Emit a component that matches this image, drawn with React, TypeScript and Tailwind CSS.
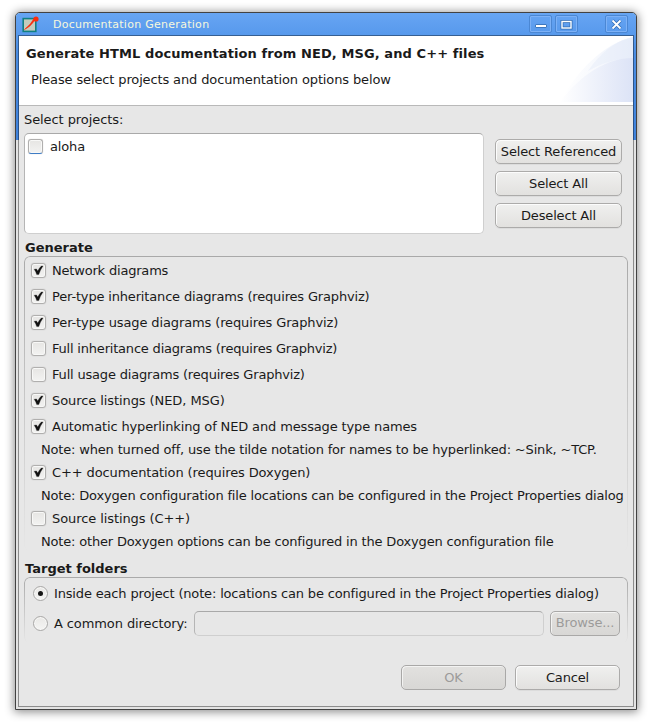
import React, { useState } from 'react';
import clsx from 'clsx';

const options = [
  { id: 'network', label: 'Network diagrams', checked: true, tracking: 'tracking-[-0.19px]' },
  { id: 'inheritance', label: 'Per-type inheritance diagrams (requires Graphviz)', checked: true, tracking: 'tracking-[-0.165px]' },
  { id: 'usage', label: 'Per-type usage diagrams (requires Graphviz)', checked: true, tracking: 'tracking-[-0.12px]' },
  { id: 'full-inheritance', label: 'Full inheritance diagrams (requires Graphviz)', checked: false, tracking: 'tracking-[-0.2px]' },
  { id: 'full-usage', label: 'Full usage diagrams (requires Graphviz)', checked: false, tracking: 'tracking-[-0.185px]' },
  { id: 'ned', label: 'Source listings (NED, MSG)', checked: true, tracking: 'tracking-[-0.08px]' },
  {
    id: 'hyperlink',
    label: 'Automatic hyperlinking of NED and message type names',
    checked: true,
    tracking: 'tracking-[-0.14px]',
    note: 'Note: when turned off, use the tilde notation for names to be hyperlinked: ~Sink, ~TCP.',
  },
  {
    id: 'doxygen',
    label: 'C++ documentation (requires Doxygen)',
    checked: true,
    tracking: 'tracking-[-0.11px]',
    note: 'Note: Doxygen configuration file locations can be configured in the Project Properties dialog',
  },
  {
    id: 'cpp',
    label: 'Source listings (C++)',
    checked: false,
    tracking: 'tracking-[-0.09px]',
    note: 'Note: other Doxygen options can be configured in the Doxygen configuration file',
  },
];

function Check({ checked, focused }: { checked: boolean; focused?: boolean }) {
  return (
    <span
      className={clsx(
        'flex w-[15px] h-[15px] shrink-0 rounded-[3px] border border-[#b0afae] bg-linear-to-b from-[#e6e5e3] to-[#f3f3f2] shadow-[inset_0_0_0_1px_#f8f8f7,0_0_1px_rgba(0,0,0,0.25)]',
        focused && 'border-b-[#3f7cc4]'
      )}
    >
      {checked && (
        <svg viewBox="0 0 13 13" className="w-[13px] h-[13px]">
          <path d="M2.2 5.3 L4.5 4.9 L5.7 7 Q7.3 3.8 9.4 2 L11 2.1 Q8.2 5.8 6.8 10.6 L4.7 10.6 Q3.9 7.7 2.2 5.3Z" fill="#111111" stroke="#111111" strokeWidth="0.3" />
        </svg>
      )}
    </span>
  );
}

function Radio({ checked }: { checked: boolean }) {
  return (
    <span className="flex w-[15px] h-[15px] shrink-0 items-center justify-center rounded-full border border-[#a9a8a7] bg-linear-to-b from-[#e9e8e6] to-[#f5f5f4] shadow-[inset_0_0_0_1px_#f8f8f7]">
      {checked && <span className="w-[5px] h-[5px] rounded-full bg-[#151515]" />}
    </span>
  );
}

function Button({ children, className, disabled }: { children: React.ReactNode; className?: string; disabled?: boolean }) {
  return (
    <button
      disabled={disabled}
      className={clsx(
        'flex h-[25px] shrink-0 items-center justify-center rounded-[5px] border bg-linear-to-b tracking-[-0.15px] whitespace-nowrap',
        disabled
          ? 'border-[#a9a8a7] from-[#e2e1df] to-[#d8d7d5] text-[#9c9b9a] shadow-[inset_1px_1px_0_#f3f3f2]'
          : 'border-[#acabaa] from-[#f0f0ef] to-[#e2e1df] text-[#1a1a1a] shadow-[inset_1px_1px_0_#fcfcfc,0_1px_0_#dcdcdc]',
        className
      )}
    >
      {children}
    </button>
  );
}

// Box whose outline fades out towards the bottom
function Group({ children, className }: { children: React.ReactNode; className?: string }) {
  return (
    <div className={clsx('relative w-[604px] pt-px', className)}>
      <div className="pointer-events-none absolute inset-0 rounded-[6px] border border-b-0 border-[#a9a9a9] mask-[linear-gradient(to_bottom,black,transparent)]" />
      {children}
    </div>
  );
}

function TitleButton({ children, className }: { children: React.ReactNode; className?: string }) {
  return (
    <button className={clsx('mb-px flex w-[23px] h-[18px] items-center justify-center rounded-[2px] border border-[#4b87d3] shadow-[inset_0_0_0_1px_#7db1f6]', className)}>
      {children}
    </button>
  );
}

export default function App() {
  const [checks, setChecks] = useState<Record<string, boolean>>(
    Object.fromEntries(options.map(o => [o.id, o.checked]))
  );
  const [target, setTarget] = useState('inside');

  return (
    <div className="w-[652px] h-[728px] overflow-hidden bg-white pl-[15px] pt-[12px] font-['DejaVu_Sans',sans-serif] text-[13px] leading-[20px] text-[#1a1a1a]">
      <div className="w-[622px] h-[698px] rounded-t-[5px] border border-[#424242] bg-[#e7e7e7] shadow-[0_1px_10px_1px_rgba(0,0,0,0.45)]">
        <div className="flex h-[696px] flex-col rounded-t-[4px] bg-[linear-gradient(to_bottom,#67a5f3_0px,#5799ec_22px,#4a8ce2_40px,#3f82dc_127px,#e3e3e3_127px)] px-[3px] pb-[3px]">
          <div className="flex h-[23px] shrink-0 items-center">
            <svg viewBox="0 0 18 18" className="ml-[2px] mt-[-2px] w-[18px] h-[18px]">
              <rect x="2.2" y="3.6" width="12.6" height="12.8" fill="#c3cbbd" stroke="#118082" strokeWidth="1.6" />
              <path d="M3.4 14.6 Q9 12.5 14.4 4.6 L13 3.6 Q9.5 10 3.4 14.6Z" fill="#fb2c0d" stroke="#fb2c0d" strokeWidth="0.5" />
              <circle cx="15" cy="4" r="2.6" fill="#fb2c0d" />
            </svg>
            <span className="ml-[14px] text-[11px] tracking-[0.28px] whitespace-nowrap text-[#f6f8dc]">Documentation Generation</span>
            <TitleButton className="ml-auto">
              <span className="mt-[3px] h-[4px] w-[12px] rounded-[1px] border border-[#3d78c0] bg-white" />
            </TitleButton>
            <TitleButton className="ml-[3px]">
              <svg viewBox="0 0 13 11" className="w-[13px] h-[11px]">
                <rect x="2" y="2.5" width="9" height="6.5" fill="none" stroke="#356eb5" strokeWidth="3" />
                <rect x="2" y="2.5" width="9" height="6.5" fill="none" stroke="white" strokeWidth="1.4" />
              </svg>
            </TitleButton>
            <TitleButton className="ml-[27px] mr-[5px]">
              <svg viewBox="0 0 11 11" className="w-[11px] h-[11px]">
                <path d="M1.5 1.5 L9.5 9.5 M9.5 1.5 L1.5 9.5" stroke="#356eb5" strokeWidth="3.4" />
                <path d="M1.5 1.5 L9.5 9.5 M9.5 1.5 L1.5 9.5" stroke="white" strokeWidth="1.8" />
              </svg>
            </TitleButton>
          </div>

          <div className="flex grow flex-col bg-[#e7e7e7] shadow-[0_0_0_1px_rgba(0,0,0,0.38)]">
            <header className="flex h-[70px] shrink-0 justify-between border-b border-[#b9b9b9] bg-white">
              <div className="pl-[7px] pt-[8px]">
                <h1 className="font-bold tracking-[0.09px] whitespace-nowrap">Generate HTML documentation from NED, MSG, and C++ files</h1>
                <p className="mt-[6px] pl-[5px] tracking-[-0.13px] whitespace-nowrap">Please select projects and documentation options below</p>
              </div>
              <svg viewBox="0 0 75 66" className="w-[75px] h-[66px] shrink-0">
                <defs>
                  <linearGradient id="outer" x1="0" x2="1" y1="0" y2="0">
                    <stop offset="0.05" stopColor="#ffffff" />
                    <stop offset="0.5" stopColor="#f7f9fd" />
                    <stop offset="1" stopColor="#e8eefa" />
                  </linearGradient>
                  <linearGradient id="inner" x1="0" x2="1" y1="0" y2="0">
                    <stop offset="0" stopColor="#ffffff" />
                    <stop offset="1" stopColor="#dce3f6" />
                  </linearGradient>
                </defs>
                <path d="M2 66 C18 36 46 7 75 1 V66Z" fill="url(#outer)" />
                <path d="M30 35 C42 17 57 5 75 1 V22 C60 22 44 27 30 35Z" fill="#e4ebf9" opacity="0.45" />
                <path d="M2 66 C16 47 42 22 75 22 V66Z" fill="url(#inner)" />
              </svg>
            </header>

            <div className="pl-[5px]">
              <p className="mt-[4px] tracking-[-0.08px]">Select projects:</p>
              <div className="mt-[3px] flex">
                <div className="h-[101px] w-[460px] rounded-[5px] border border-[#cfcfcf] border-t-[#a9a9a9] border-l-[#b5b5b5] bg-white pl-[3px] pt-[2px]">
                  <div className="flex h-[20px] items-center">
                    <Check checked={false} focused />
                    <span className="ml-[7px] pt-px tracking-[-0.15px]">aloha</span>
                  </div>
                </div>
                <div className="ml-[11px] flex flex-col gap-[7px] pt-[6px]">
                  <Button className="w-[127px]">Select Referenced</Button>
                  <Button className="w-[127px]">Select All</Button>
                  <Button className="w-[127px]">Deselect All</Button>
                </div>
              </div>

              <h2 className="mt-[4px] pl-px font-bold">Generate</h2>
              <Group className="mt-[-2px] h-[295px]">
                {options.map(o => (
                  <React.Fragment key={o.id}>
                    <div
                      className="flex h-[26px] items-center pl-[7px]"
                      onClick={() => setChecks({ ...checks, [o.id]: !checks[o.id] })}
                    >
                      <Check checked={checks[o.id]} />
                      <span className={clsx('ml-[6px] pt-[2px] whitespace-nowrap', o.tracking)}>{o.label}</span>
                    </div>
                    {o.note && <p className="h-[20px] pl-[17px] pt-px tracking-[-0.172px] whitespace-nowrap">{o.note}</p>}
                  </React.Fragment>
                ))}
              </Group>

              <h2 className="mt-[8px] pl-px font-bold">Target folders</h2>
              <Group className="mt-[-2px] h-[66px]">
                <div className="flex h-[30px] items-center pl-[9px]" onClick={() => setTarget('inside')}>
                  <Radio checked={target === 'inside'} />
                  <span className="ml-[6px] pt-[2px] tracking-[-0.16px] whitespace-nowrap">
                    Inside each project (note: locations can be configured in the Project Properties dialog)
                  </span>
                </div>
                <div className="flex h-[30px] items-center pl-[9px]" onClick={() => setTarget('common')}>
                  <Radio checked={target === 'common'} />
                  <span className="ml-[6px] w-[140px] pt-[2px] tracking-[-0.1px] whitespace-nowrap">A common directory:</span>
                  <div className="h-[25px] w-[350px] rounded-[5px] border border-[#cfcfcf] border-t-[#a9a9a9] border-l-[#b5b5b5]" />
                  <Button disabled className="ml-[6px] w-[70px]">Browse...</Button>
                </div>
              </Group>

              <div className="mt-[22px] flex justify-end gap-[9px] pr-[13px]">
                <Button disabled className="w-[105px]">OK</Button>
                <Button className="w-[105px]">Cancel</Button>
              </div>
            </div>
          </div>
        </div>
      </div>
    </div>
  );
}
